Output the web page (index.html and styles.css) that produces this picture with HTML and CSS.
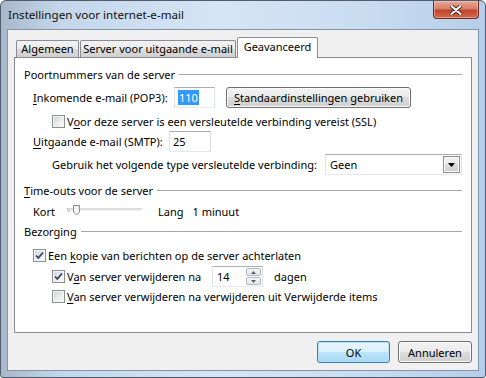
FILE: index.html
```html
<!DOCTYPE html>
<html lang="nl">
<head>
    <meta charset="UTF-8">
    <title>Instellingen voor internet-e-mail</title>
    <link rel="stylesheet" href="styles.css">
</head>
<body>
    <div class="window">
        <div class="titlebar">
            <span class="title">Instellingen voor internet-e-mail</span>
            <div class="close">
                <svg width="12" height="10" viewBox="0 0 12 10">
                    <path d="M1.5 1 L10.5 9 M10.5 1 L1.5 9" stroke="#4a2a22" stroke-width="4" stroke-linecap="round"/>
                    <path d="M1.5 1 L10.5 9 M10.5 1 L1.5 9" stroke="#fff" stroke-width="2" stroke-linecap="round"/>
                </svg>
            </div>
        </div>

        <div class="client">
            <div class="tabs">
                <div class="tab tab-general">Algemeen</div>
                <div class="tab tab-server">Server voor uitgaande e-mail</div>
                <div class="tab tab-advanced selected">Geavanceerd</div>
            </div>

            <div class="panel">
                <div class="group-title">Poortnummers van de server</div>

                <div class="row row-pop3 indent1">
                    <span class="label label-pop3"><u>I</u>nkomende e-mail (POP3):</span>
                    <span class="textbox port-in"><span class="selection">110</span></span>
                    <span class="button wide"><u>S</u>tandaardinstellingen gebruiken</span>
                </div>

                <div class="row row-ssl indent2">
                    <span class="check"></span>
                    <span>V<u>o</u>or deze server is een versleutelde verbinding vereist (SSL)</span>
                </div>

                <div class="row row-smtp indent1">
                    <span class="label label-smtp"><u>U</u>itgaande e-mail (SMTP):</span>
                    <span class="textbox port-out">25</span>
                </div>

                <div class="row row-enc indent2">
                    <span class="label label-enc">Gebruik het volgende type versleutelde verbinding:</span>
                    <span class="combo">
                        <span class="combo-value">Geen</span>
                        <span class="combo-arrow">
                            <svg width="7" height="4" viewBox="0 0 7 4"><path d="M0 0 H7 L3.5 4 Z" fill="#000"/></svg>
                        </span>
                    </span>
                </div>

                <div class="group-title group-timeouts"><span><u>T</u>ime-outs voor de server</span></div>

                <div class="row row-slider indent1">
                    <span class="label label-short">Kort</span>
                    <svg class="slider" width="75" height="14" viewBox="0 0 75 14">
                        <path d="M0.5 4 V7 H3" stroke="#a7a7a7" fill="none"/>
                        <rect x="0" y="4.5" width="75" height="1" fill="#b9b9b9"/>
                        <rect x="0" y="5.5" width="75" height="1" fill="#e6e6e6"/>
                        <path d="M6.5 1.5 H12.5 V8 L9.5 11 L6.5 8 Z" fill="#f4f4f4" stroke="#8b8b8b"/>
                    </svg>
                    <span class="long">Lang</span>
                    <span class="duration">1 minuut</span>
                </div>

                <div class="group-title group-delivery">Bezorging</div>

                <div class="row row-keep indent1">
                    <span class="check checked">
                        <svg width="11" height="11" viewBox="0 0 11 11"><path d="M2 5.5 L4.3 8 L9 2.5" stroke="#2f416a" stroke-width="1.8" fill="none"/></svg>
                    </span>
                    <span>Een <u>k</u>opie van berichten op de server achterlaten</span>
                </div>

                <div class="row row-remove indent2">
                    <span class="check checked">
                        <svg width="11" height="11" viewBox="0 0 11 11"><path d="M2 5.5 L4.3 8 L9 2.5" stroke="#2f416a" stroke-width="1.8" fill="none"/></svg>
                    </span>
                    <span class="label label-remove">V<u>a</u>n server verwijderen na</span>
                    <span class="spin">
                        <span class="spin-value">14</span>
                        <span class="spin-buttons">
                            <span class="spin-btn"><svg width="5" height="3" viewBox="0 0 5 3"><path d="M0 3 H5 L2.5 0 Z" fill="#4d6185"/></svg></span>
                            <span class="spin-btn"><svg width="5" height="3" viewBox="0 0 5 3"><path d="M0 0 H5 L2.5 3 Z" fill="#4d6185"/></svg></span>
                        </span>
                    </span>
                    <span class="days">dagen</span>
                </div>

                <div class="row row-deleted indent2">
                    <span class="check"></span>
                    <span><u>V</u>an server verwijderen na verwijderen uit Verwijderde items</span>
                </div>
            </div>

            <div class="actions">
                <span class="button default">OK</span>
                <span class="button">Annuleren</span>
            </div>
        </div>
    </div>
</body>
</html>
```

FILE: styles.css
```css
* {
    box-sizing: border-box;
    margin: 0;
    padding: 0;
}

body {
    width: 486px;
    height: 378px;
    overflow: hidden;
    font-family: "Noto Sans", "Open Sans", sans-serif;
    font-size: 11px;
    color: #000;
    background: #fff;
}

u {
    text-decoration-thickness: 1px;
    text-underline-offset: 2px;
}

/* window frame */
.window {
    width: 486px;
    height: 378px;
    border: 1px solid #4f5d6e;
    border-radius: 6px 6px 3px 3px;
    background: linear-gradient(to right, #a9b8c9 0%, #c3d6eb 12%, #d6e5f5 45%, #cadcf0 75%, #b5cee9 100%);
    display: flex;
    flex-direction: column;
}

.titlebar {
    height: 28px;
    display: flex;
    justify-content: space-between;
    align-items: flex-start;
    padding: 0 6px 0 7px;
}

.title {
    margin-top: 6px;
    line-height: 16px;
    font-size: 11.6px;
    color: #111;
}

.close {
    width: 46px;
    height: 18px;
    border: 1px solid #6a2c22;
    border-top: none;
    border-radius: 0 0 4px 4px;
    background: linear-gradient(to bottom, #e9a899 0%, #d87d68 45%, #c1442c 55%, #d36a4c 100%);
    box-shadow: inset 0 0 0 1px rgba(255, 220, 210, 0.45);
    display: flex;
    justify-content: center;
    align-items: center;
}

.client {
    flex: 1;
    margin: 0 6px 6px 6px;
    background: #f0f0f0;
    border: 1px solid #8394a8;
    padding-top: 7px;
}

/* tabs */
.tabs {
    height: 20px;
    margin: 0 6px;
    display: flex;
    align-items: flex-end;
}

.tab {
    height: 17px;
    border: 1px solid #898c95;
    border-bottom: none;
    border-radius: 2px 2px 0 0;
    background: linear-gradient(to bottom, #f2f2f2 0%, #ebebeb 50%, #dddddd 50%, #cfcfcf 100%);
    display: flex;
    justify-content: center;
    align-items: center;
    padding-bottom: 1px;
}

.tab-general {
    width: 63px;
    margin-left: 2px;
}

.tab-server {
    width: 156px;
    margin-left: 1px;
}

.tab-advanced {
    width: 81px;
    margin-left: 1px;
}

.tab.selected {
    height: 21px;
    margin-bottom: -1px;
    background: #fff;
    position: relative;
    z-index: 1;
    padding-bottom: 3px;
}

.panel {
    height: 276px;
    margin: 0 6px;
    border: 1px solid #898c95;
    background: #fff;
    padding: 8px 9px 0;
}

/* group headers */
.group-title {
    height: 16px;
    display: flex;
    align-items: center;
    gap: 4px;
}

.group-title::after {
    content: "";
    flex: 1;
    height: 1px;
    background: #a6a6a6;
    margin-top: 1px;
}

.group-timeouts {
    margin-top: 7px;
}

.group-delivery {
    margin-top: 4px;
}

/* rows */
.row {
    display: flex;
    align-items: center;
    height: 16px;
}

.indent1 {
    margin-left: 9px;
}

.indent2 {
    margin-left: 28px;
}

.row-pop3 {
    height: 21px;
    margin-top: 5px;
}

.row-ssl {
    margin-top: 5px;
}

.row-smtp {
    height: 21px;
    margin-top: 2px;
}

.row-enc {
    height: 21px;
    margin-top: 2px;
}

.row-slider {
    margin-top: 5px;
}

.row-keep {
    margin-top: 8px;
}

.row-remove {
    height: 21px;
    margin-top: 3px;
}

.row-deleted {
    margin-top: 1px;
}

.label {
    flex-shrink: 0;
}

.label-pop3 {
    width: 141px;
}

.label-smtp {
    width: 136px;
}

.label-enc {
    width: 273px;
}

.label-short {
    width: 34px;
}

.label-remove {
    width: 145px;
}

/* controls */
.textbox {
    height: 21px;
    border: 1px solid;
    border-color: #abadb3 #dbdfe6 #e3e9ef #e2e3ea;
    background: #fff;
    display: flex;
    align-items: center;
    padding-left: 3px;
}

.port-in {
    width: 41px;
}

.port-out {
    width: 42px;
}

.selection {
    background: #3399ff;
    color: #fff;
    line-height: 15px;
    padding: 0 1px;
}

.button {
    height: 21px;
    border: 1px solid #707070;
    border-radius: 3px;
    background: linear-gradient(to bottom, #f2f2f2 0%, #ebebeb 50%, #dddddd 50%, #cfcfcf 100%);
    box-shadow: inset 0 0 0 1px #fbfbfb;
    display: flex;
    justify-content: center;
    align-items: center;
}

.button.wide {
    width: 185px;
    margin-left: 11px;
}

.check {
    width: 13px;
    height: 13px;
    flex-shrink: 0;
    margin-right: 2px;
    border: 1px solid #8e8f8f;
    background: linear-gradient(135deg, #cfd2d6 0%, #eeeeee 60%, #fbfbfb 100%);
    box-shadow: inset 0 0 0 1px #f4f4f4;
    display: flex;
    justify-content: center;
    align-items: center;
}

.combo {
    width: 137px;
    height: 21px;
    border: 1px solid;
    border-color: #abadb3 #dbdfe6 #e3e9ef #e2e3ea;
    background: #fff;
    display: flex;
    align-items: center;
    padding: 1px;
}

.combo-value {
    flex: 1;
    padding-left: 3px;
}

.combo-arrow {
    width: 17px;
    height: 17px;
    border: 1px solid #8b8b8b;
    background: linear-gradient(to bottom, #f2f2f2 0%, #ebebeb 50%, #dddddd 50%, #cfcfcf 100%);
    box-shadow: inset 0 0 0 1px #fbfbfb;
    display: flex;
    justify-content: center;
    align-items: center;
}

.slider {
    display: block;
}

.long {
    margin-left: 16px;
}

.duration {
    margin-left: 9px;
}

.spin {
    width: 51px;
    height: 21px;
    border: 1px solid;
    border-color: #abadb3 #dbdfe6 #e3e9ef #e2e3ea;
    background: #fff;
    display: flex;
    padding: 1px;
}

.spin-value {
    flex: 1;
    display: flex;
    align-items: center;
    padding-left: 3px;
}

.spin-buttons {
    width: 15px;
    display: flex;
    flex-direction: column;
    gap: 1px;
}

.spin-btn {
    flex: 1;
    border: 1px solid #b5b8bd;
    border-radius: 2px;
    background: linear-gradient(to bottom, #f6f6f6, #e3e4e6);
    display: flex;
    justify-content: center;
    align-items: center;
}

.days {
    margin-left: 11px;
}

/* dialog buttons */
.actions {
    display: flex;
    justify-content: flex-end;
    gap: 8px;
    margin-top: 8px;
    padding-right: 6px;
}

.actions .button {
    width: 74px;
    height: 22px;
}

.actions .button.default {
    width: 73px;
    border-color: #3c7fb1;
    background: linear-gradient(to bottom, #eaf6fd 0%, #d9f0fc 50%, #bee6fd 50%, #a7d9f5 100%);
    box-shadow: inset 0 0 0 1px #b8e2f8;
}
```
